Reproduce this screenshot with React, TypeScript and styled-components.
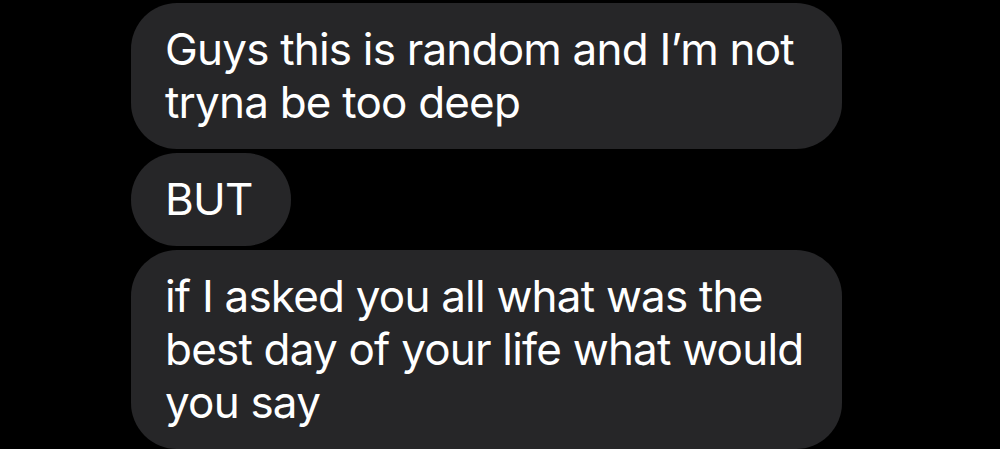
import React from "react";
import styled, { createGlobalStyle } from "styled-components";

const Global = createGlobalStyle`
  html, body {
    margin: 0;
    padding: 0;
    background: #000000;
    height: 449px;
    overflow: hidden;
  }
`;

const Thread = styled.div`
  display: flex;
  flex-direction: column;
  align-items: flex-start;
  gap: 4px;
  padding: 3px 0 0 131px;
  font-family: Inter, "Noto Sans", "Liberation Sans", sans-serif;
`;

const Bubble = styled.div`
  box-sizing: border-box;
  max-width: 711px;
  padding: 20px 38px 20px 34px;
  background: #262628;
  color: #ffffff;
  font-size: 44px;
  line-height: 53px;
  letter-spacing: -0.8px;
  border-radius: 46px;
`;

const messages = [
  "Guys this is random and I\u2019m not tryna be too deep",
  "BUT",
  "if I asked you all what was the best day of your life what would you say",
];

export default function App() {
  return (
    <>
      <Global />
      <Thread>
        {messages.map((m, i) => (
          <Bubble key={i}>{m}</Bubble>
        ))}
      </Thread>
    </>
  );
}
